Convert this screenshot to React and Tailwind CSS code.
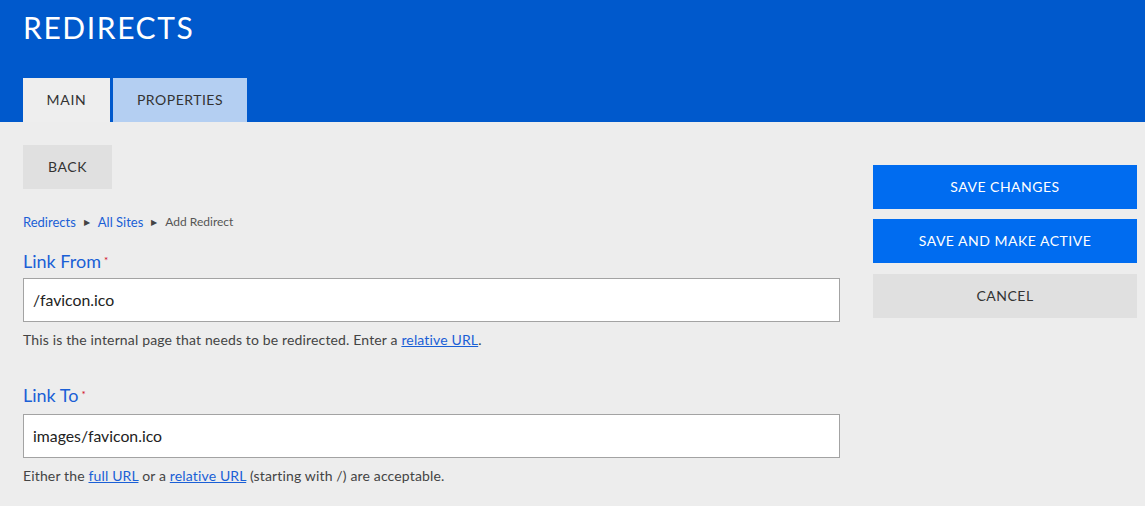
export default function App() {
  return (
    <div className="w-[1145px] h-[506px] overflow-hidden bg-[#ededed] font-['Lato','Liberation_Sans',sans-serif]">
      <div className="bg-[#0059cc] h-[122px] px-[23px] flex flex-col justify-between">
        <h1 className="text-white text-[30px] leading-none tracking-[1.6px] pt-[12px]">REDIRECTS</h1>
        <div className="flex gap-[3px]">
          <div className="w-[87px] h-[44px] bg-[#eeeeee] flex items-center justify-center pb-[1px] text-[14px] tracking-[0.7px] text-[#333]">MAIN</div>
          <div className="w-[134px] h-[44px] bg-[#b4cff2] flex items-center justify-center pb-[1px] text-[14px] tracking-[0.5px] text-[#333]">PROPERTIES</div>
        </div>
      </div>
      <div className="flex px-[23px] pr-[8px] gap-[33px]">
        <div className="w-[817px] pt-[23px]">
          <button className="w-[89px] h-[44px] bg-[#e0e0e0] pb-[1px] text-[14px] tracking-[0.6px] text-[#333]">BACK</button>
          <div className="mt-[24px] h-[18px] flex items-center text-[13px] leading-[18px]">
            <a className="text-[#1a5fd6]">Redirects</a>
            <span className="text-[#444] text-[8px] mx-[8px]">▶</span>
            <a className="text-[#1a5fd6]">All Sites</a>
            <span className="text-[#444] text-[8px] mx-[8px]">▶</span>
            <span className="text-[#555] text-[12px]">Add Redirect</span>
          </div>
          <label className="block mt-[19px] h-[22px] leading-[22px] text-[18px] text-[#1a5fd6]">
            Link From<span className="text-[#d0021b] text-[10px] align-top relative top-[-1px] ml-[3px]">*</span>
          </label>
          <div className="mt-[6px] h-[44px] bg-white border border-[#a3a3a3] px-[9px] flex items-center text-[15.8px] text-[#222]">/favicon.ico</div>
          <p className="mt-[9px] text-[14px] tracking-[0.15px] leading-[18px] text-[#444]">
            This is the internal page that needs to be redirected. Enter a <a className="text-[#1a5fd6] underline">relative URL</a>.
          </p>
          <label className="block mt-[35px] h-[22px] leading-[22px] text-[18px] text-[#1a5fd6]">
            Link To<span className="text-[#d0021b] text-[10px] align-top relative top-[-1px] ml-[3px]">*</span>
          </label>
          <div className="mt-[8px] h-[44px] bg-white border border-[#a3a3a3] px-[9px] flex items-center text-[15.8px] text-[#222]">images/favicon.ico</div>
          <p className="mt-[9px] text-[14px] tracking-[0.15px] leading-[18px] text-[#444]">
            Either the <a className="text-[#1a5fd6] underline">full URL</a> or a <a className="text-[#1a5fd6] underline">relative URL</a> (starting with /) are acceptable.
          </p>
        </div>
        <div className="w-[264px] pt-[43px] flex flex-col">
          <button className="h-[44px] bg-[#006cf0] pb-[1px] text-white text-[14px] tracking-[0.5px]">SAVE CHANGES</button>
          <button className="mt-[10px] h-[44px] bg-[#006cf0] pb-[1px] text-white text-[14px] tracking-[0.5px]">SAVE AND MAKE ACTIVE</button>
          <button className="mt-[11px] h-[44px] bg-[#e0e0e0] pb-[1px] text-[#333] text-[14px] tracking-[0.5px]">CANCEL</button>
        </div>
      </div>
    </div>
  );
}
